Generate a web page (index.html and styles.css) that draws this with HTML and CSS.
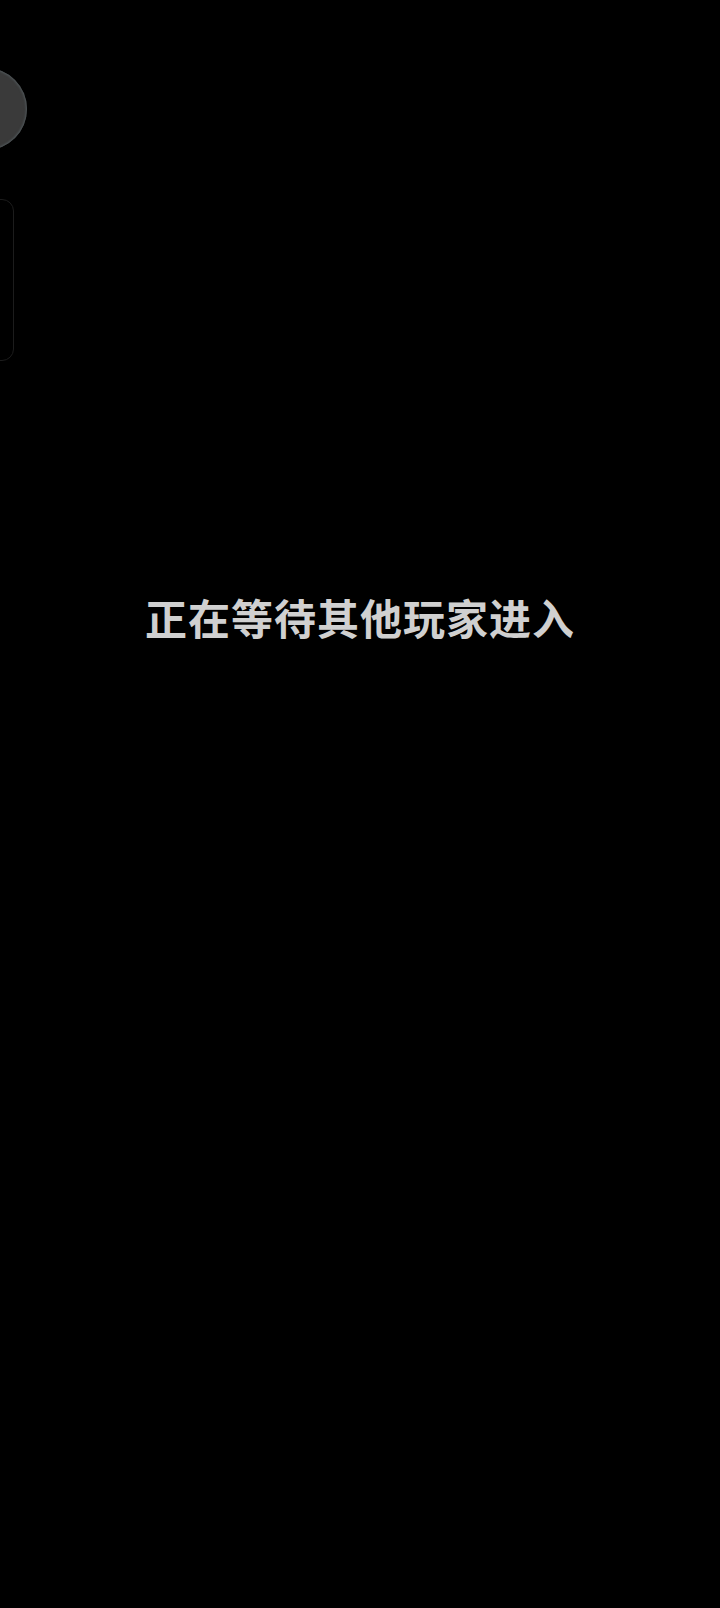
FILE: index.html
```html
<!DOCTYPE html>
<html lang="zh-CN">
<head>
<meta charset="utf-8">
<title>等待</title>
<link rel="stylesheet" href="styles.css">
</head>
<body>
<div class="screen">
  <div class="float-btn"></div>
  <div class="side-panel"></div>
  <div class="message">正在等待其他玩家进入</div>
</div>
</body>
</html>
```
FILE: styles.css
```css
html, body {
  margin: 0;
  padding: 0;
  background: #000;
}
.screen {
  position: relative;
  width: 720px;
  height: 1608px;
  overflow: hidden;
  background: #000;
}
.float-btn {
  position: absolute;
  left: -55px;
  top: 68px;
  width: 82px;
  height: 82px;
  border-radius: 50%;
  background: #3a3a3a;
  box-shadow: inset 0 0 2px 1px #50575a;
}
.side-panel {
  position: absolute;
  left: -30px;
  top: 199px;
  width: 42px;
  height: 160px;
  border: 1px solid #1c1c1c;
  border-radius: 12px;
}
.message {
  padding-top: 596px;
  text-align: center;
  font-family: "Noto Sans CJK SC", sans-serif;
  font-weight: 600;
  font-size: 42px;
  line-height: 42px;
  letter-spacing: 1px;
  color: #d0d0d0;
}
```
